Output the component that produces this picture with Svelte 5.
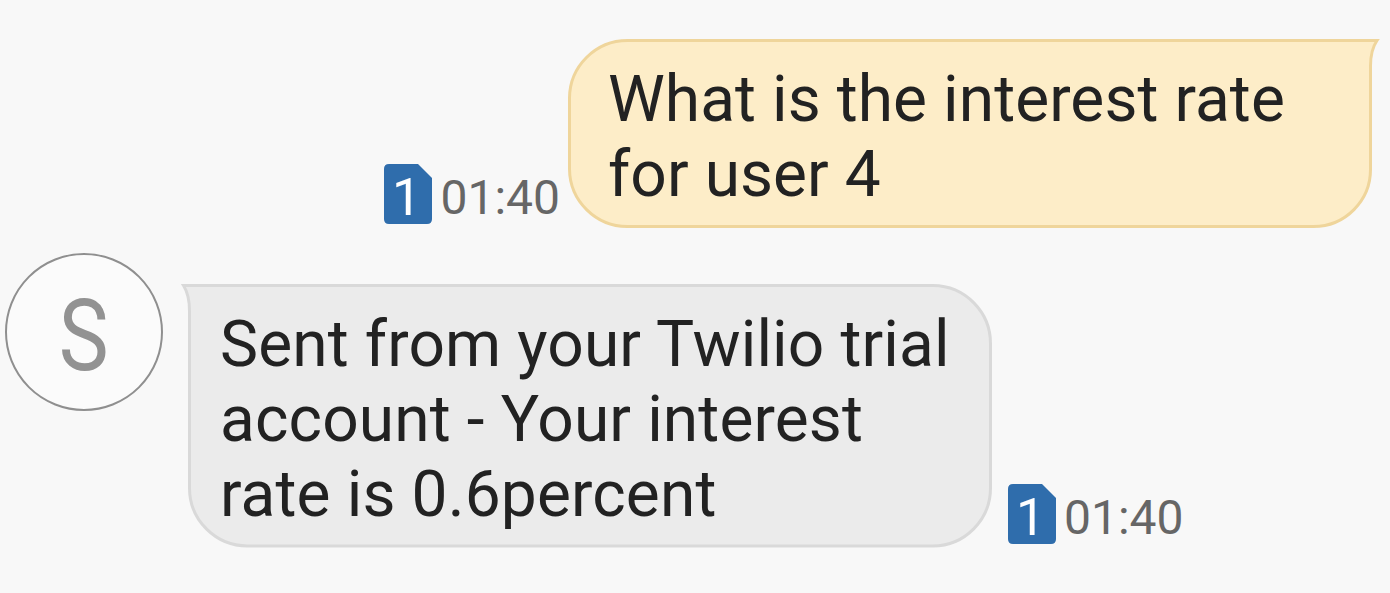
<script lang="ts">
	interface Message {
		id: number;
		direction: 'sent' | 'received';
		lines: string[];
		time: string;
		sim: string;
	}

	const contact = { initial: 'S' };

	const messages: Message[] = [
		{
			id: 1,
			direction: 'sent',
			lines: ['What is the interest rate', 'for user 4'],
			time: '01:40',
			sim: '1'
		},
		{
			id: 2,
			direction: 'received',
			lines: ['Sent from your Twilio trial', 'account - Your interest', 'rate is 0.6percent'],
			time: '01:40',
			sim: '1'
		}
	];
</script>

{#snippet meta(message: Message)}
	<div class="meta">
		<!-- SIM card badge -->
		<svg class="sim" width="48" height="60" viewBox="0 0 48 60">
			<path d="M5 0H34L48 14V55Q48 60 43 60H5Q0 60 0 55V5Q0 0 5 0Z" fill="#2f6dac" />
			<text x="8" y="50.500" font-size="52" fill="#fff">{message.sim}</text>
		</svg>
		<span class="time">{message.time}</span>
	</div>
{/snippet}

<main class="thread">
	{#each messages as message (message.id)}
		<div class="row {message.direction}">
			{#if message.direction === 'sent'}
				{@render meta(message)}
			{:else}
				<div class="avatar"><span>{contact.initial}</span></div>
			{/if}

			<div class="bubble">
				<!-- Bubble outline, with the tail in the top corner -->
				{#if message.direction === 'sent'}
					<svg class="shape" width="812" height="190" viewBox="0 0 812 190">
						<path
							d="M60 2.5H809Q802.5 12 802.5 28V131A57 57 0 0 1 745.5 188.500H60A58 58 0 0 1 1.5 131V61A58 58 0 0 1 60 2.5Z"
						/>
					</svg>
				{:else}
					<svg class="shape" width="812" height="265" viewBox="0 0 812 265">
						<path
							d="M2.5 2.5H752A58 58 0 0 1 809.5 61V205A58 58 0 0 1 752 263H67A58 58 0 0 1 8.5 205V28Q8.5 12 2.5 2.5Z"
						/>
					</svg>
				{/if}
				<p>
					{#each message.lines as line}
						<span class="line">{line}</span>
					{/each}
				</p>
			</div>

			{#if message.direction === 'received'}
				{@render meta(message)}
			{/if}
		</div>
	{/each}
</main>

<style>
	:global(body) {
		margin: 0;
		background: #f8f8f8;
	}

	.thread {
		box-sizing: border-box;
		width: 1390px;
		height: 593px;
		padding-top: 38px;
		overflow: hidden;
		background: #f8f8f8;
		font-family: Roboto, 'Liberation Sans', sans-serif;
	}

	.row {
		display: flex;
		align-items: flex-end;
	}

	.sent {
		justify-content: flex-end;
		padding-right: 10px;
	}

	.received {
		margin-top: 25px;
		padding-left: 5px;
	}

	.bubble {
		position: relative;
		box-sizing: border-box;
		width: 812px;
		color: #222;
	}

	.sent .bubble {
		height: 190px;
		padding: 24px 0 0 40px;
		letter-spacing: 0.08px;
	}

	.received .bubble {
		height: 265px;
		margin: 30px 0 0 18px;
		padding: 24px 0 0 39px;
		letter-spacing: 0.14px;
	}

	.shape {
		position: absolute;
		top: 0;
		left: 0;
		stroke-width: 3;
	}

	.sent .shape {
		fill: #fdedc8;
		stroke: #efd59b;
	}

	.received .shape {
		fill: #ebebeb;
		stroke: #d9d9d9;
	}

	p {
		position: relative;
		margin: 0;
		font-size: 64px;
		line-height: 75px;
		white-space: nowrap;
	}

	.line {
		display: block;
	}

	.meta {
		display: flex;
		align-items: center;
		gap: 8px;
		height: 60px;
	}

	.sent .meta {
		margin: 0 8px 4px 0;
	}

	.received .meta {
		margin: 0 0 4px 15px;
	}

	.sim {
		display: block;
		overflow: visible;
	}

	.time {
		padding-top: 8px;
		color: #666;
		font-size: 48px;
		line-height: 60px;
	}

	.avatar {
		display: flex;
		align-items: center;
		justify-content: center;
		align-self: flex-start;
		box-sizing: border-box;
		width: 158px;
		height: 158px;
		padding-top: 7px;
		border: 2px solid #8f8f8f;
		border-radius: 50%;
		background: #fbfbfb;
		color: #929292;
		font-size: 100px;
		line-height: 1;
	}

	.avatar span {
		transform: scaleX(0.84);
	}
</style>
